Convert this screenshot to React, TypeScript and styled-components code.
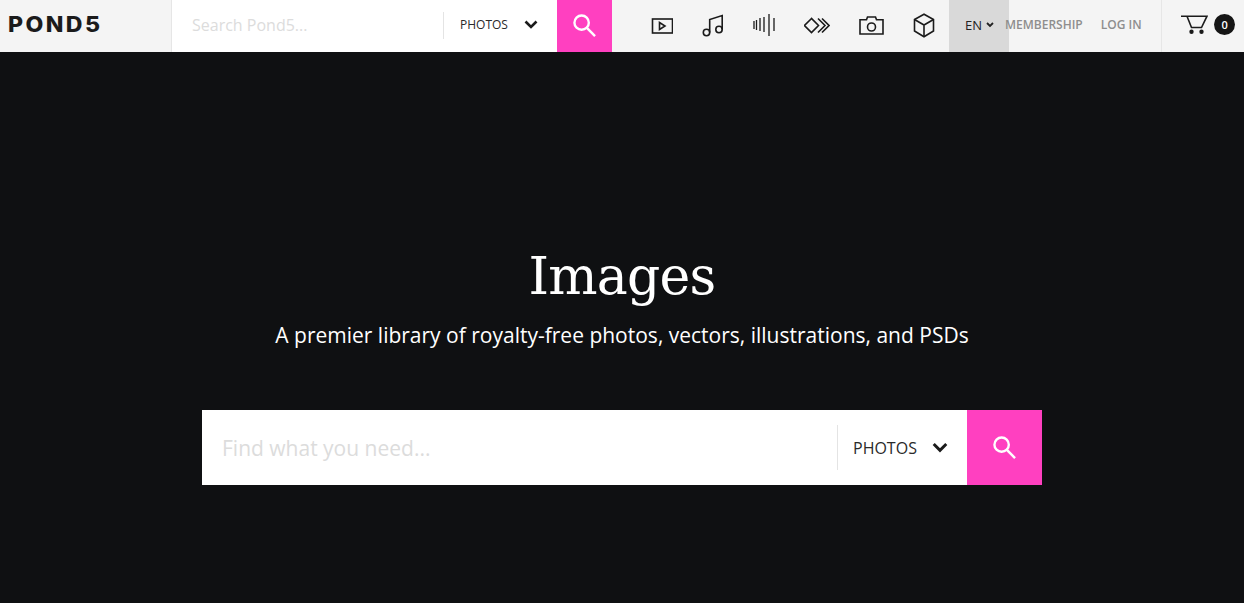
import styled, { createGlobalStyle } from "styled-components";

const GlobalStyle = createGlobalStyle`
    html, body {
        margin: 0;
        padding: 0;
        height: 100%;
        background: #0f1012;
        font-family: "Open Sans", "Liberation Sans", sans-serif;
    }
    * { box-sizing: border-box; }
`;

const Page = styled.div`
    width: 1244px;
    height: 603px;
    overflow: hidden;
    background: #0f1012;
`;

const Header = styled.header`
    display: flex;
    align-items: stretch;
    height: 52px;
    background: #f4f4f4;
`;

const LogoBox = styled.div`
    display: flex;
    align-items: center;
    width: 172px;
    padding: 0 0 4px 8px;
    border-right: 1px solid #e6e6e6;
`;

const Logo = styled.span`
    display: inline-block;
    font-family: "Inter", sans-serif;
    font-weight: 800;
    font-size: 21px;
    letter-spacing: 2.2px;
    color: #1b1b1b;
    transform: scaleX(1.1);
    transform-origin: left center;
`;

const SearchBar = styled.div<{ $large?: boolean }>`
    display: flex;
    align-items: stretch;
    background: #fff;
    width: ${(p) => (p.$large ? "840px" : "440px")};
    height: ${(p) => (p.$large ? "75px" : "auto")};
`;

const SearchInput = styled.input<{ $large?: boolean }>`
    flex: 1;
    min-width: 0;
    border: 0;
    outline: 0;
    background: transparent;
    font-family: inherit;
    font-size: ${(p) => (p.$large ? "21px" : "16px")};
    padding: ${(p) => (p.$large ? "0 0 0 20px" : "0 0 2px 20px")};
    color: #333;

    &::placeholder {
        color: #dcdcdc;
        opacity: 1;
    }
`;

const TypeSelect = styled.div<{ $large?: boolean }>`
    position: relative;
    display: flex;
    align-items: center;
    width: ${(p) => (p.$large ? "130px" : "114px")};
    padding: ${(p) => (p.$large ? "0 0 0 16px" : "0 0 3px 17px")};
    font-size: ${(p) => (p.$large ? "16px" : "12px")};
    color: #2a2a2a;

    &::before {
        content: "";
        position: absolute;
        left: 0;
        top: ${(p) => (p.$large ? "15px" : "12px")};
        bottom: ${(p) => (p.$large ? "15px" : "13px")};
        width: 1px;
        background: #e4e4e4;
    }
`;

const Chevron = styled.svg<{ $large?: boolean }>`
    width: ${(p) => (p.$large ? "16px" : "14px")};
    height: ${(p) => (p.$large ? "11px" : "9px")};
    margin-left: ${(p) => (p.$large ? "15px" : "16px")};
    flex: none;
`;

const SearchButton = styled.button<{ $large?: boolean }>`
    display: flex;
    align-items: center;
    justify-content: center;
    flex: none;
    width: ${(p) => (p.$large ? "75px" : "55px")};
    border: 0;
    padding: ${(p) => (p.$large ? "0" : "0 0 1px")};
    background: #ff40c0;
`;

const Nav = styled.nav`
    display: flex;
    align-items: center;
    gap: 29px;
    padding: 0 0 1px 39px;
    width: 337px;
`;

const IconSvg = styled.svg`
    display: block;
    flex: none;
    fill: none;
    stroke: #1b1b1b;
    stroke-width: 1.6;
`;

const LangButton = styled.div`
    display: flex;
    align-items: center;
    width: 60px;
    padding: 0 0 2px 16px;
    background: #d9d9d9;
    font-size: 13px;
    font-weight: 500;
    color: #222;
`;

const LangChevron = styled.svg`
    width: 8px;
    height: 6px;
    margin-left: 4px;
`;

const TextLink = styled.a<{ $gap?: number }>`
    display: flex;
    align-items: center;
    margin-left: ${(p) => p.$gap ?? 0}px;
    padding-bottom: 3px;
    font-size: 12px;
    font-weight: 600;
    color: #8e8e8e;
    position: relative;
`;

const CartBox = styled.div`
    display: flex;
    align-items: center;
    margin-left: 19.5px;
    padding: 0 0 3px 19px;
    border-left: 1px solid #e6e6e6;
    flex: 1;
`;

const Badge = styled.span`
    display: flex;
    align-items: center;
    justify-content: center;
    width: 21px;
    height: 21px;
    margin-left: 6px;
    border-radius: 50%;
    background: #151515;
    color: #fff;
    font-size: 11px;
    font-weight: 600;
`;

const Hero = styled.main`
    display: flex;
    flex-direction: column;
    align-items: center;
    padding-top: 188px;
    color: #fff;
`;

const Title = styled.h1`
    margin: 0;
    font-family: "DejaVu Serif", serif;
    font-weight: 400;
    font-size: 52px;
    line-height: 72px;
    letter-spacing: -0.8px;
`;

const Subtitle = styled.p`
    margin: 9px 0 61px;
    font-size: 21px;
    line-height: 28px;
`;

function ChevronIcon({ large }: { large?: boolean }) {
    return (
        <Chevron $large={large} viewBox="0 0 14 9">
            <path d="M1.500 1.500 7 7l5.500-5.500" fill="none" stroke="#1b1b1b" strokeWidth="2.600" />
        </Chevron>
    );
}

function SearchIcon() {
    return (
        <svg width={23} height={23} viewBox="0 0 24 24" fill="none" stroke="#fff" strokeWidth="2.500">
            <circle cx="9" cy="9" r="7.500" />
            <path d="M14.500 14.500l8.500 8.500" />
        </svg>
    );
}

export default function App() {
    return (
        <Page>
            <GlobalStyle />
            <Header>
                <LogoBox>
                    <Logo>POND5</Logo>
                </LogoBox>
                <SearchBar>
                    <SearchInput placeholder="Search Pond5..." />
                    <TypeSelect>
                        PHOTOS
                        <ChevronIcon />
                    </TypeSelect>
                    <SearchButton>
                        <SearchIcon />
                    </SearchButton>
                </SearchBar>
                <Nav>
                    <IconSvg width="22" height="16" viewBox="0 0 22 16">
                        <rect x="1.500" y="1" width="20" height="14" />
                        <path d="M8.500 4.500v7l5.500-3.500z" />
                    </IconSvg>
                    <IconSvg width="22" height="23" viewBox="0 0 22 23">
                        <circle cx="4.500" cy="18.500" r="3.200" />
                        <circle cx="17" cy="15.500" r="3.200" />
                        <path d="M7.700 18.500V5.500L20.200 1.500v14" />
                    </IconSvg>
                    <IconSvg width="22" height="23" viewBox="0 0 22 23">
                        <path strokeWidth="1.300" d="M1 7v8M3.500 6v10M7 4v13M11 3v15M16 0v22M21 4v13" />
                    </IconSvg>
                    <IconSvg width="26" height="17" viewBox="1 0 26 17">
                        <path d="M8.500 1.500 1.500 8.500l7 7 7-7z" />
                        <path d="M15 1.500l7 7-7 7M19 1.500l7 7-7 7" />
                    </IconSvg>
                    <IconSvg width="25" height="19" viewBox="0 0 25 19">
                        <path d="M1 3.800h6.500L8.500 1h8l1 2.800H24V18H1z" />
                        <circle cx="12.500" cy="11" r="4" />
                    </IconSvg>
                    <IconSvg width="22" height="25" viewBox="0 0 22 25">
                        <path d="M11 1.200 1.500 6.500v11.500L11 23.800l9.500-5.800V6.500z" />
                        <path d="M1.500 6.500 11 12l9.500-5.500M11 12v11.800" />
                    </IconSvg>
                </Nav>
                <LangButton>
                    EN
                    <LangChevron viewBox="0 0 8 6">
                        <path d="M1 1l3 3 3-3" fill="none" stroke="#222" strokeWidth="1.800" />
                    </LangChevron>
                </LangButton>
                <TextLink $gap={-4}>MEMBERSHIP</TextLink>
                <TextLink $gap={18}>LOG IN</TextLink>
                <CartBox>
                    <svg width="27" height="19" viewBox="0 0 27 19" fill="none" stroke="#1b1b1b" strokeWidth="1.600">
                        <path d="M0 1.200h6l4.500 11.300h10L26 1.200H6" />
                        <circle cx="10.500" cy="16.800" r="1.400" fill="#1b1b1b" />
                        <circle cx="20.500" cy="16.800" r="1.400" fill="#1b1b1b" />
                    </svg>
                    <Badge>0</Badge>
                </CartBox>
            </Header>
            <Hero>
                <Title>Images</Title>
                <Subtitle>A premier library of royalty-free photos, vectors, illustrations, and PSDs</Subtitle>
                <SearchBar $large>
                    <SearchInput $large placeholder="Find what you need..." />
                    <TypeSelect $large>
                        PHOTOS
                        <ChevronIcon large />
                    </TypeSelect>
                    <SearchButton $large>
                        <SearchIcon />
                    </SearchButton>
                </SearchBar>
            </Hero>
        </Page>
    );
}
